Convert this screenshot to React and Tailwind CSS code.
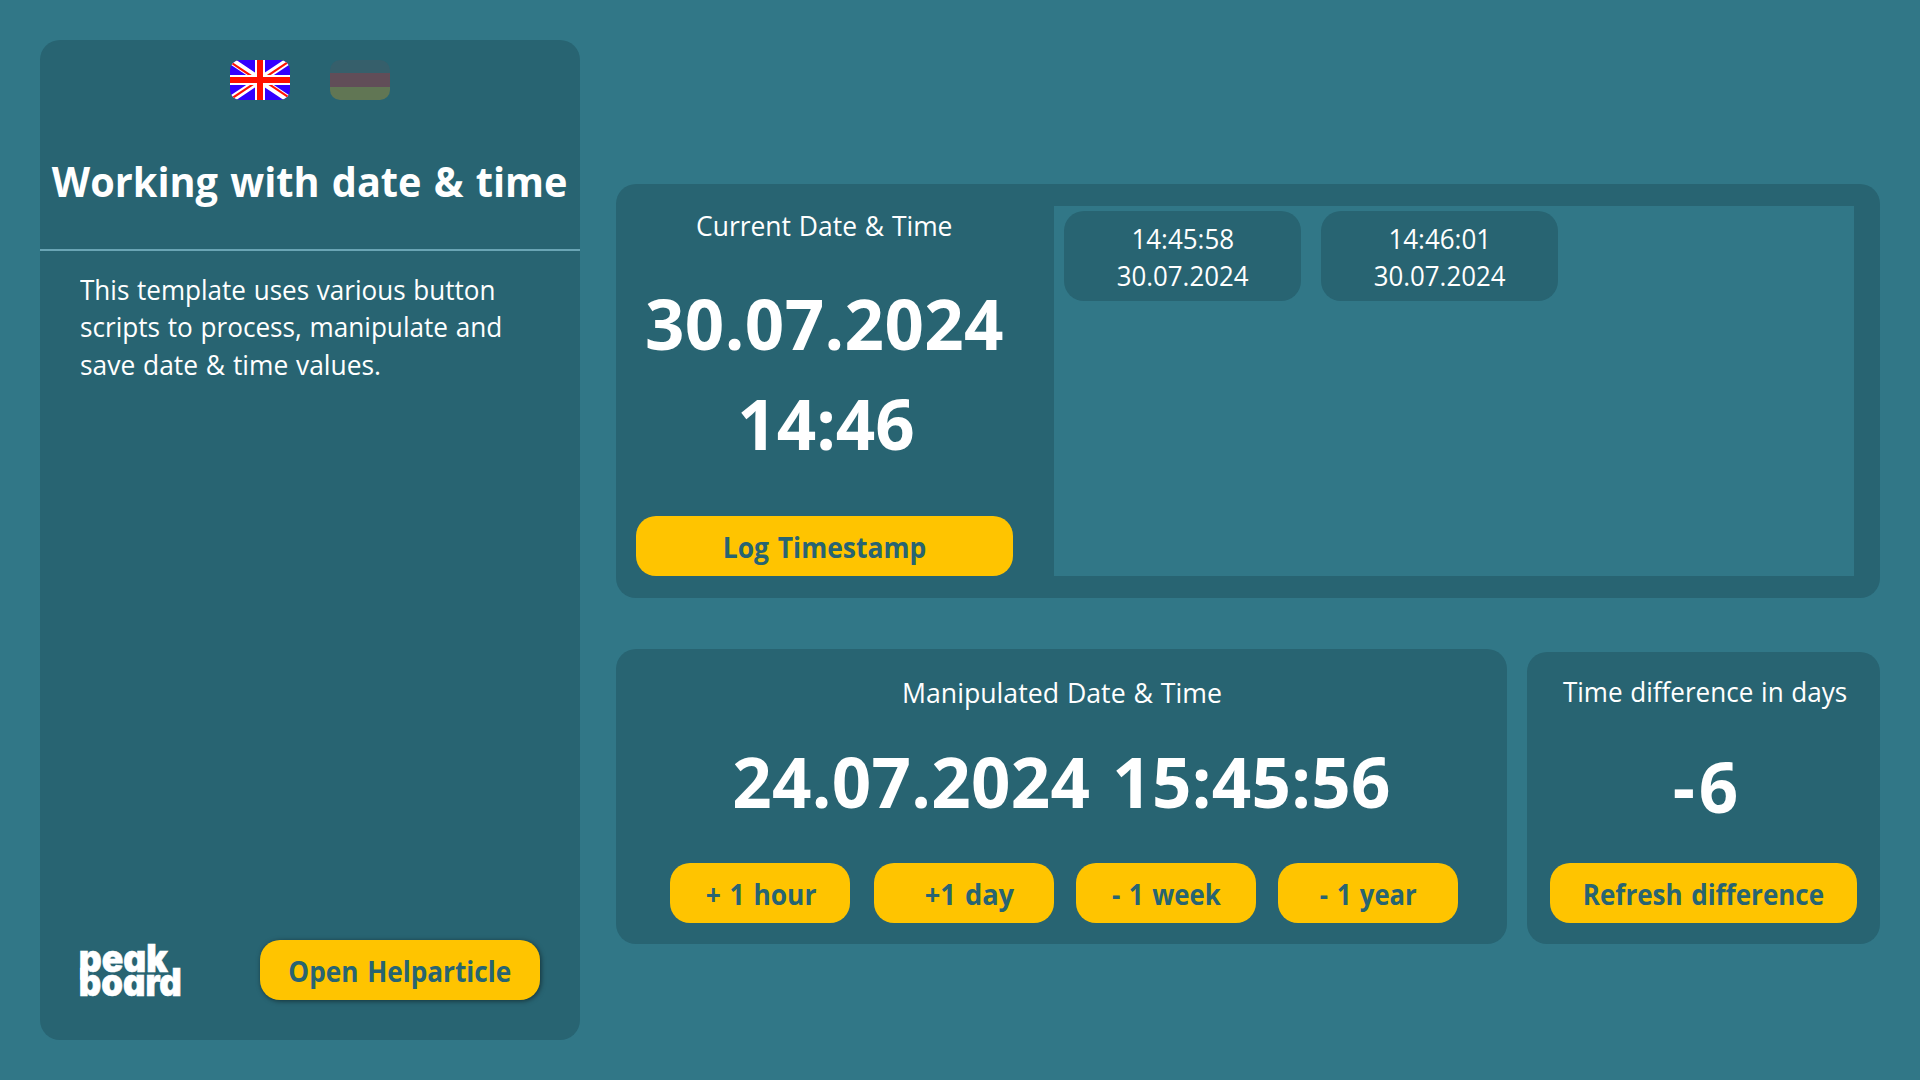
function Label({ className = "", children }) {
  return <span className={`inline-block whitespace-pre ${className}`}>{children}</span>;
}

function Button({ className = "", text = "", children }) {
  return (
    <button
      className={`flex h-[60px] items-center justify-center rounded-[20px] bg-[#ffc400] pt-[2px] text-[27.7px] font-bold leading-[38px] text-[#286472] ${className}`}
    >
      <Label className={`[word-spacing:2px] ${text}`}>{children}</Label>
    </button>
  );
}

function BritishFlag() {
  return (
    <svg viewBox="0 0 60 40" className="h-[40px] w-[60px] rounded-[10px]">
      <rect width="60" height="40" fill="#3300ff" />
      <path d="M0 0L60 40M60 0L0 40" stroke="#fff" strokeWidth="7" />
      <path
        d="M0 1.8L30 21.8M60 38.2L30 18.2M60 0.8L30 20.8M0 39.6L30 19.6"
        stroke="#ff1000"
        strokeWidth="2.2"
      />
      <path d="M30 0V40M0 20H60" stroke="#fff" strokeWidth="10" />
      <path d="M30 0V40M0 20H60" stroke="#ff1000" strokeWidth="6" />
    </svg>
  );
}

function GermanFlag() {
  return (
    <div className="flex h-[40px] w-[60px] flex-col overflow-hidden rounded-[10px]">
      <div className="flex-1 bg-[#365f6b]" />
      <div className="flex-1 bg-[#614d58]" />
      <div className="flex-1 bg-[#617654]" />
    </div>
  );
}

function Logo() {
  return (
    <svg
      viewBox="0 0 104 58"
      className='h-[58px] w-[104px] overflow-visible font-["Inter"] text-[38px] font-black [font-feature-settings:"cv11"]'
      fill="#fff"
      stroke="#fff"
      strokeWidth="0.6"
    >
      <text x="-1.2" y="29.5" textLength="89" lengthAdjust="spacingAndGlyphs">peak</text>
      <text x="-1.2" y="53.7" textLength="103" lengthAdjust="spacingAndGlyphs">board</text>
    </svg>
  );
}

function LogEntry({ time, date }) {
  return (
    <div className="flex h-[90px] w-[237px] flex-col items-center rounded-[20px] bg-[#286472] pt-[9px] text-[27.7px] leading-[37px]">
      <Label className="scale-x-[0.938]">{time}</Label>
      <Label className="scale-x-[0.934]">{date}</Label>
    </div>
  );
}

export default function App() {
  return (
    <div className='flex h-[1080px] w-[1920px] gap-[36px] overflow-hidden bg-[#317787] p-[40px] font-["Open_Sans","Noto_Sans",sans-serif] text-white'>
      <aside className="flex h-[1000px] w-[540px] flex-col rounded-[20px] bg-[#286472]">
        <div className="mt-[20px] flex justify-center gap-[40px]">
          <BritishFlag />
          <GermanFlag />
        </div>
        <h1 className="mt-[51px] flex justify-center text-[41.5px] font-bold leading-[60px]">
          <Label className="scale-x-[0.956] [word-spacing:2px]">Working with date &amp; time</Label>
        </h1>
        <div className="mt-[38px] h-[2px] bg-[#6aa5b5]" />
        <div className="ml-[40px] mt-[20px] flex flex-col items-start text-[27.7px] leading-[37px] [word-spacing:1px]">
          <Label className="origin-left scale-x-[0.941]">This template uses various button</Label>
          <Label className="origin-left scale-x-[0.944]">scripts to process, manipulate and</Label>
          <Label className="mt-px origin-left scale-x-[0.953]">save date &amp; time values.</Label>
        </div>
        <div className="mb-[40px] mt-auto flex items-end justify-between px-[40px]">
          <Logo />
          <Button className="w-[280px] shadow-[1px_1px_5px_rgba(0,0,0,0.5)]" text="scale-x-[0.946]">Open Helparticle</Button>
        </div>
      </aside>

      <main className="flex w-[1264px] flex-col pt-[144px]">
        <section className="flex h-[414px] gap-[41px] rounded-[20px] bg-[#286472] pl-[20px] pt-[22px]">
          <div className="flex w-[377px] flex-col text-center">
            <div className="text-[27.7px] leading-[38px]">
              <Label className="scale-x-[0.955] [word-spacing:1px]">Current Date &amp; Time</Label>
            </div>
            <div className="mt-[29px] text-[69px] font-bold leading-[100px] tracking-[0.4px]">30.07.2024</div>
            <div className="pl-[3px] text-[69px] font-bold leading-[100px]">14:46</div>
            <Button className="mt-[43px]" text="scale-x-[0.956]">Log Timestamp</Button>
          </div>
          <div className="flex h-[370px] w-[800px] gap-[20px] bg-[#317787] pl-[10px] pt-[5px]">
            <LogEntry time="14:45:58" date="30.07.2024" />
            <LogEntry time="14:46:01" date="30.07.2024" />
          </div>
        </section>

        <div className="mt-[51px] flex items-end gap-[20px]">
          <section className="h-[295px] w-[891px] rounded-[20px] bg-[#286472] pt-[24px] text-center">
            <div className="text-[27.7px] leading-[38px]">
              <Label className="scale-x-[0.964] [word-spacing:1px]">Manipulated Date &amp; Time</Label>
            </div>
            <div className="mt-[20px] text-[69px] font-bold leading-[100px] tracking-[0.28px] [word-spacing:4px]">
              24.07.2024 15:45:56
            </div>
            <div className="mt-[32px] flex gap-[22px] pl-[54px]">
              <Button className="mr-[2px] w-[180px] pl-[3px]" text="scale-x-[0.953]">+ 1 hour</Button>
              <Button className="w-[180px] pl-[10px]" text="scale-x-[0.984]">+1 day</Button>
              <Button className="w-[180px] pl-[1px]" text="scale-x-[0.933]">- 1 week</Button>
              <Button className="w-[180px]" text="scale-x-[0.926]">- 1 year</Button>
            </div>
          </section>
          <section className="flex h-[292px] w-[353px] flex-col items-center rounded-[20px] bg-[#286472] pt-[20px]">
            <div className="pl-[4px] text-[27.7px] leading-[38px]">
              <Label className="scale-x-[0.941] [word-spacing:1px]">Time difference in days</Label>
            </div>
            <div className="mt-[26px] pl-[8px] text-[69px] font-bold leading-[100px] tracking-[4px]">-6</div>
            <Button className="mt-[27px] w-[307px]" text="scale-x-[0.939]">Refresh difference</Button>
          </section>
        </div>
      </main>
    </div>
  );
}
